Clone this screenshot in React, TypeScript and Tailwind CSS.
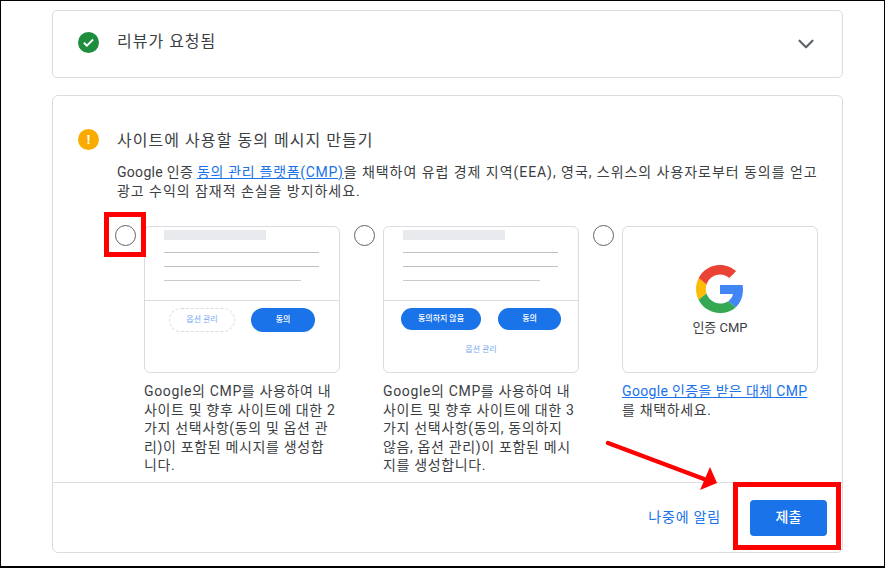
import React from "react";
import { ChevronDown } from "lucide-react";

const font = "font-['Roboto','Noto_Sans_CJK_KR',sans-serif]";

const PreviewLines = () => (
  <div className="h-[74px] border-b border-[#dadce0] pl-[19px] pt-[3px]">
    <div className="h-[10px] w-[102px] bg-[#e8eaed]" />
    <div className="mt-[12px] h-px w-[155px] bg-[#bdc1c6]" />
    <div className="mt-[13px] h-px w-[155px] bg-[#bdc1c6]" />
    <div className="mt-[13px] h-px w-[137px] bg-[#c8cbcf]" />
  </div>
);

const Radio = () => (
  <div className="mt-[-1px] h-[21px] w-[21px] shrink-0 rounded-full border-[1.5px] border-[#5f6368] bg-white" />
);

const GoogleG = () => (
  <svg width="48" height="48" viewBox="0 0 48 48">
    <path fill="#EA4335" d="M24 9.5c3.54 0 6.71 1.22 9.21 3.6l6.85-6.85C35.9 2.38 30.47 0 24 0 14.62 0 6.51 5.38 2.56 13.22l7.98 6.19C12.43 13.72 17.74 9.5 24 9.5z" />
    <path fill="#4285F4" d="M46.98 24.55c0-1.57-.15-3.09-.38-4.55H24v9.02h12.94c-.58 2.96-2.26 5.48-4.78 7.18l7.73 6c4.51-4.18 7.09-10.36 7.09-17.65z" />
    <path fill="#FBBC05" d="M10.53 28.59c-.48-1.45-.76-2.99-.76-4.59s.27-3.14.76-4.59l-7.98-6.19C.92 16.46 0 20.12 0 24c0 3.88.92 7.54 2.56 10.78l7.97-6.19z" />
    <path fill="#34A853" d="M24 48c6.48 0 11.93-2.13 15.89-5.81l-7.73-6c-2.15 1.45-4.92 2.3-8.16 2.3-6.26 0-11.57-4.22-13.47-9.91l-7.98 6.19C6.51 42.62 14.62 48 24 48z" />
  </svg>
);

const App = () => {
  return (
    <div className={`${font} relative h-[568px] w-[885px] overflow-hidden border border-b-2 border-black bg-white pl-[51px] text-[#3c4043]`}>
      <div className="mt-[9px] flex h-[68px] w-[791px] items-center rounded-[5px] border border-[#dadce0] px-[25px]">
        <div className="mt-[-3px] flex h-[21px] w-[21px] items-center justify-center rounded-full bg-[#1e8e3e]">
          <svg width="13" height="13" viewBox="0 0 24 24" fill="none" stroke="white" strokeWidth="3.4">
            <path d="M3.5 12.5l5.5 5.5L20.5 6.5" />
          </svg>
        </div>
        <span className="ml-[18px] mt-[-5px] text-[16px] tracking-[1px]">리뷰가 요청됨</span>
        <ChevronDown className="ml-auto mr-[-2px] mt-[-1px] text-[#5f6368]" size={26} strokeWidth={2} />
      </div>

      <div className="mt-[17px] flex h-[458px] w-[791px] flex-col rounded-[6px] border border-[#dadce0]">
        <div className="flex-1 pl-[25px] pt-[33px]">
          <div className="flex items-start">
            <div className="flex h-[21px] w-[21px] items-center justify-center rounded-full bg-[#f9ab00] text-[13px] font-bold leading-none text-white">
              !
            </div>
            <span className="ml-[18px] mt-[1px] text-[16px] leading-[22px] tracking-[1.05px]">사이트에 사용할 동의 메시지 만들기</span>
          </div>
          <div className="ml-[39px] mt-[11px] text-[14px] leading-[19px] tracking-[0.95px]">
            <div className="whitespace-nowrap">
              <span className="tracking-[0.3px]">Google 인증 </span>
              <span className="tracking-[0.7px] text-[#1a73e8] underline">동의 관리 플랫폼(CMP)</span>
              <span>을 채택하여 유럽 경제 지역(EEA), 영국, 스위스의 사용자로부터 동의를 얻고</span>
            </div>
            <div>광고 수익의 잠재적 손실을 방지하세요.</div>
          </div>

          <div className="ml-[37px] mt-[25px] grid grid-cols-[225px_225px_225px] gap-x-[14px]">
            <div className="flex gap-[8px]">
              <Radio />
              <div className="w-[196px]">
                <div className="h-[147px] rounded-[6px] border border-[#dadce0]">
                  <PreviewLines />
                  <div className="flex gap-[16px] pl-[24px] pt-[7px]">
                    <div className="flex h-[24px] w-[66px] items-center justify-center rounded-full border border-dashed border-[#dadce0] text-[8px] text-[#7baaf0]">옵션 관리</div>
                    <div className="flex h-[24px] w-[64px] items-center justify-center rounded-full bg-[#1a73e8] text-[8px] font-medium text-white">동의</div>
                  </div>
                </div>
                <p className="mt-[9px] w-[193px] text-[14px] leading-[18.5px] tracking-[0.65px]">
                  Google의 CMP를 사용하여 내 사이트 및 향후 사이트에 대한 2가지 선택사항(동의 및 옵션 관리)이 포함된 메시지를 생성합니다.
                </p>
              </div>
            </div>

            <div className="flex gap-[8px]">
              <Radio />
              <div className="w-[196px]">
                <div className="h-[147px] rounded-[6px] border border-[#dadce0]">
                  <PreviewLines />
                  <div className="flex gap-[17px] pl-[17px] pt-[7px]">
                    <div className="flex h-[22px] w-[80px] items-center justify-center rounded-full bg-[#1a73e8] text-[8px] font-medium text-white">동의하지 않음</div>
                    <div className="flex h-[22px] w-[63px] items-center justify-center rounded-full bg-[#1a73e8] text-[8px] font-medium text-white">동의</div>
                  </div>
                  <div className="mt-[14px] text-center text-[8px] text-[#7baaf0]">옵션 관리</div>
                </div>
                <p className="mt-[9px] w-[193px] text-[14px] leading-[18.5px] tracking-[0.65px]">
                  Google의 CMP를 사용하여 내 사이트 및 향후 사이트에 대한 3가지 선택사항(동의, 동의하지 않음, 옵션 관리)이 포함된 메시지를 생성합니다.
                </p>
              </div>
            </div>

            <div className="flex gap-[8px]">
              <Radio />
              <div className="w-[196px]">
                <div className="flex h-[147px] flex-col items-center rounded-[6px] border border-[#dadce0] pt-[38px]">
                  <GoogleG />
                  <span className="mt-[7px] text-[13px] leading-[16px]">인증 CMP</span>
                </div>
                <div className="mt-[9px] text-[14px] leading-[18.5px] tracking-[0.65px]">
                  <div className="tracking-[0.35px] text-[#1a73e8] underline">Google 인증을 받은 대체 CMP</div>
                  <div>를 채택하세요.</div>
                </div>
              </div>
            </div>
          </div>
        </div>

        <div className="flex h-[70px] items-center justify-end border-t border-[#dadce0] pr-[15px]">
          <span className="text-[14px] tracking-[0.8px] text-[#1a73e8]">나중에 알림</span>
          <div className="ml-[29px] flex h-[36px] w-[77px] items-center justify-center rounded-[4px] bg-[#1a73e8] text-[14px] font-medium text-white">
            제출
          </div>
        </div>
      </div>

      {/* annotations drawn over the page */}
      <div className="absolute left-[103px] top-[211px] h-[45px] w-[42px] border-[5px] border-[#ff0000]" />
      <div className="absolute left-[732px] top-[481px] h-[68px] w-[108px] border-[5px] border-[#ff0000]" />
      <svg className="absolute left-[598px] top-[431px]" width="130" height="70" viewBox="0 0 130 70">
        <path d="M9 11L105 47" stroke="#ff0000" strokeWidth="4.5" strokeLinecap="round" />
        <path d="M111 35L118 51L101 58Z" fill="#ff0000" />
      </svg>
    </div>
  );
};

export default App;
